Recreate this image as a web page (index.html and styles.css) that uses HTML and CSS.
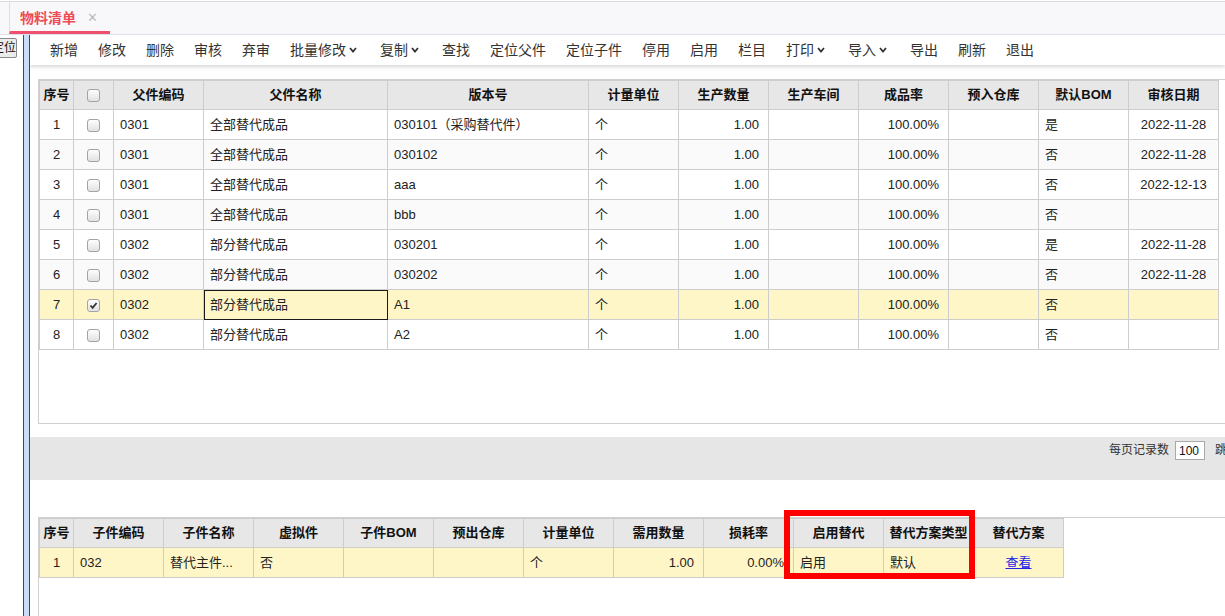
FILE: index.html
```html
<!DOCTYPE html>
<html lang="zh-CN">
<head>
<meta charset="utf-8">
<title>物料清单</title>
<link rel="stylesheet" href="styles.css">
</head>
<body>
<div class="tabbar">
  <div class="tab">
    <span class="tab-title">物料清单</span>
    <span class="tab-close">✕</span>
  </div>
</div>
<div class="workspace">
  <div class="sidebar">
    <button class="locate-btn">定位</button>
  </div>
  <div class="splitter"></div>
  <div class="main">
    <div class="toolbar">
      <span class="tb-item">新增</span>
      <span class="tb-item">修改</span>
      <span class="tb-item">删除</span>
      <span class="tb-item">审核</span>
      <span class="tb-item">弃审</span>
      <span class="tb-item">批量修改<svg class="chev" viewBox="0 0 8 6" width="8" height="6"><polyline points="1,1 4,4.5 7,1" fill="none" stroke="#333" stroke-width="1.8"/></svg></span>
      <span class="tb-item">复制<svg class="chev" viewBox="0 0 8 6" width="8" height="6"><polyline points="1,1 4,4.5 7,1" fill="none" stroke="#333" stroke-width="1.8"/></svg></span>
      <span class="tb-item">查找</span>
      <span class="tb-item">定位父件</span>
      <span class="tb-item">定位子件</span>
      <span class="tb-item">停用</span>
      <span class="tb-item">启用</span>
      <span class="tb-item">栏目</span>
      <span class="tb-item">打印<svg class="chev" viewBox="0 0 8 6" width="8" height="6"><polyline points="1,1 4,4.5 7,1" fill="none" stroke="#333" stroke-width="1.8"/></svg></span>
      <span class="tb-item">导入<svg class="chev" viewBox="0 0 8 6" width="8" height="6"><polyline points="1,1 4,4.5 7,1" fill="none" stroke="#333" stroke-width="1.8"/></svg></span>
      <span class="tb-item">导出</span>
      <span class="tb-item">刷新</span>
      <span class="tb-item">退出</span>
    </div>

    <div class="grid-panel">
      <table class="grid top-grid">
        <colgroup>
          <col class="c-no"><col class="c-chk"><col class="c-90"><col class="c-name"><col class="c-ver">
          <col class="c-90"><col class="c-90"><col class="c-90"><col class="c-90"><col class="c-90"><col class="c-90"><col class="c-90">
        </colgroup>
        <thead>
          <tr>
            <th>序号</th><th><span class="cb"></span></th><th>父件编码</th><th>父件名称</th><th>版本号</th>
            <th>计量单位</th><th>生产数量</th><th>生产车间</th><th>成品率</th><th>预入仓库</th><th>默认BOM</th><th>审核日期</th>
          </tr>
        </thead>
        <tbody>
          <tr><td class="ctr">1</td><td class="ctr"><span class="cb"></span></td><td>0301</td><td>全部替代成品</td><td>030101（采购替代件）</td><td>个</td><td class="num">1.00</td><td></td><td class="num">100.00%</td><td></td><td>是</td><td class="ctr">2022-11-28</td></tr>
          <tr class="alt"><td class="ctr">2</td><td class="ctr"><span class="cb"></span></td><td>0301</td><td>全部替代成品</td><td>030102</td><td>个</td><td class="num">1.00</td><td></td><td class="num">100.00%</td><td></td><td>否</td><td class="ctr">2022-11-28</td></tr>
          <tr><td class="ctr">3</td><td class="ctr"><span class="cb"></span></td><td>0301</td><td>全部替代成品</td><td>aaa</td><td>个</td><td class="num">1.00</td><td></td><td class="num">100.00%</td><td></td><td>否</td><td class="ctr">2022-12-13</td></tr>
          <tr class="alt"><td class="ctr">4</td><td class="ctr"><span class="cb"></span></td><td>0301</td><td>全部替代成品</td><td>bbb</td><td>个</td><td class="num">1.00</td><td></td><td class="num">100.00%</td><td></td><td>否</td><td class="ctr"></td></tr>
          <tr><td class="ctr">5</td><td class="ctr"><span class="cb"></span></td><td>0302</td><td>部分替代成品</td><td>030201</td><td>个</td><td class="num">1.00</td><td></td><td class="num">100.00%</td><td></td><td>是</td><td class="ctr">2022-11-28</td></tr>
          <tr class="alt"><td class="ctr">6</td><td class="ctr"><span class="cb"></span></td><td>0302</td><td>部分替代成品</td><td>030202</td><td>个</td><td class="num">1.00</td><td></td><td class="num">100.00%</td><td></td><td>否</td><td class="ctr">2022-11-28</td></tr>
          <tr class="sel"><td class="ctr">7</td><td class="ctr"><span class="cb checked"><svg viewBox="0 0 11 11" width="11" height="11"><polyline points="2.5,5.5 4.6,7.8 8.6,3" fill="none" stroke="#333" stroke-width="1.8"/></svg></span></td><td>0302</td><td class="focus">部分替代成品</td><td>A1</td><td>个</td><td class="num">1.00</td><td></td><td class="num">100.00%</td><td></td><td>否</td><td class="ctr"></td></tr>
          <tr><td class="ctr">8</td><td class="ctr"><span class="cb"></span></td><td>0302</td><td>部分替代成品</td><td>A2</td><td>个</td><td class="num">1.00</td><td></td><td class="num">100.00%</td><td></td><td>否</td><td class="ctr"></td></tr>
        </tbody>
      </table>
    </div>

    <div class="pager">
      <span class="pager-label">每页记录数</span>
      <input class="pager-input" type="text" value="100">
      <span class="pager-label">跳转</span>
    </div>

    <div class="detail-panel">
      <table class="grid bottom-grid">
        <colgroup>
          <col class="c-no"><col class="c-90"><col class="c-90"><col class="c-90"><col class="c-90"><col class="c-90">
          <col class="c-90"><col class="c-90"><col class="c-90"><col class="c-90"><col class="c-90"><col class="c-90">
        </colgroup>
        <thead>
          <tr>
            <th>序号</th><th>子件编码</th><th>子件名称</th><th>虚拟件</th><th>子件BOM</th><th>预出仓库</th>
            <th>计量单位</th><th>需用数量</th><th>损耗率</th><th>启用替代</th><th>替代方案类型</th><th>替代方案</th>
          </tr>
        </thead>
        <tbody>
          <tr class="sel"><td class="ctr">1</td><td>032</td><td>替代主件...</td><td>否</td><td></td><td></td><td>个</td><td class="num">1.00</td><td class="num">0.00%</td><td>启用</td><td>默认</td><td class="ctr"><a class="link" href="#">查看</a></td></tr>
        </tbody>
      </table>
    </div>

    <div class="highlight-box"></div>
  </div>
</div>
</body>
</html>
```

FILE: styles.css
```css
* { box-sizing: border-box; }
html, body { margin: 0; padding: 0; }
body {
  width: 1225px;
  height: 616px;
  overflow: hidden;
  background: #fff;
  font-family: "Liberation Sans", "Noto Sans CJK SC", sans-serif;
  color: #222;
}

/* tab bar */
.tabbar {
  margin-top: 1px;
  height: 34px;
  border-top: 1px solid #dcdcdc;
  border-bottom: 1px solid #dedfe8;
  background: #f8f8fa;
  display: flex;
  align-items: flex-end;
  padding-left: 9px;
}
.tab {
  height: 32px;
  width: 101px;
  display: flex;
  align-items: center;
  padding-left: 10px;
  padding-top: 3px;
  border-left: 1px solid #dedede;
  border-bottom: 3px solid #f0506e;
}
.tab-title {
  color: #ef4b57;
  font-size: 14px;
  font-weight: bold;
  line-height: 16px;
}
.tab-close {
  color: #bbb;
  font-size: 13px;
  margin-left: 11px;
  line-height: 14px;
}

/* workspace */
.workspace {
  display: flex;
  height: 581px;
}
.sidebar {
  width: 23px;
  overflow: hidden;
  padding-top: 3px;
}
.locate-btn {
  margin-left: -9px;
  width: 26px;
  height: 20px;
  padding: 0;
  font-family: "Liberation Sans", "Noto Sans CJK SC", sans-serif;
  font-size: 12px;
  line-height: 18px;
  color: #111;
  background: #ececec;
  border: 1px solid #8a8a8a;
  border-radius: 2px;
}
.splitter {
  width: 7px;
  background: #c8ddf8;
  border-left: 1px solid #1c4c9c;
  border-right: 1px solid #1c4c9c;
}
.main {
  flex: 1;
  overflow: hidden;
  position: relative;
}

/* toolbar */
.toolbar {
  height: 30px;
  display: flex;
  align-items: center;
  padding-left: 10px;
  background: #fff;
  box-shadow: 0 2px 4px rgba(0, 0, 0, 0.16);
  position: relative;
  z-index: 1;
}
.tb-item {
  font-size: 14px;
  color: #333;
  padding: 0 10px;
  line-height: 18px;
  white-space: nowrap;
  display: flex;
  align-items: center;
}
.chev { margin-left: 3px; margin-right: 3px; }

/* grids */
.grid-panel {
  margin: 14px 0 0 8px;
  width: 1200px;
  height: 345px;
  border: 1px solid #cfcfcf;
  border-right: none;
}
.grid {
  border-collapse: collapse;
  table-layout: fixed;
  font-size: 13px;
}
.top-grid { width: 1180px; }
.bottom-grid { width: 1025px; }
.c-no { width: 34px; }
.c-chk { width: 40px; }
.c-90 { width: 90px; }
.c-name { width: 184px; }
.c-ver { width: 201px; }

.grid th {
  height: 29px;
  background: #e7e7e7;
  border: 1px solid #cdcdcd;
  font-weight: bold;
  text-align: center;
  padding: 0 2px;
  line-height: 16px;
  color: #111;
  white-space: nowrap;
  overflow: hidden;
}
.grid td {
  height: 30px;
  border: 1px solid #cdcdcd;
  padding: 0 6px;
  line-height: 16px;
  white-space: nowrap;
  overflow: hidden;
  background: #fff;
}
.grid tr.alt td { background: #fafafa; }
.grid tr.sel td { background: #fff6c8; }
.grid td.ctr { text-align: center; }
.grid td.num { text-align: right; padding-right: 9px; }
.grid td.focus { outline: 1px solid #1a1a1a; outline-offset: -1px; }

.cb {
  display: inline-block;
  width: 13px;
  height: 13px;
  border: 1px solid #a3a3a3;
  border-radius: 3px;
  background: linear-gradient(#fdfdfd, #e2e2e2);
  vertical-align: middle;
  position: relative;
}
.cb svg { position: absolute; left: 0; top: 0; }

/* pager */
.pager {
  margin-top: 13px;
  height: 43px;
  width: calc(100% + 14px);
  background: #e6e6e6;
  display: flex;
  justify-content: flex-end;
  align-items: flex-start;
  padding-top: 4px;
  font-size: 12px;
}
.pager-label {
  line-height: 19px;
  color: #333;
}
.pager-input {
  width: 30px;
  height: 19px;
  margin: 0 10px 0 6px;
  padding: 0 3px;
  border: 1px solid #a9a9a9;
  font-family: "Liberation Sans", sans-serif;
  font-size: 12px;
  color: #111;
  background: #fff;
}

/* detail grid */
.detail-panel {
  margin: 37px 0 0 8px;
  width: 1200px;
  height: 100px;
  border-top: 1px solid #d0d0d0;
  border-left: 1px solid #d0d0d0;
}
.link { color: #2222e6; text-decoration: underline; }

.highlight-box {
  position: absolute;
  left: 754px;
  top: 475px;
  width: 191px;
  height: 69px;
  border: 6px solid #ff0000;
}
```
